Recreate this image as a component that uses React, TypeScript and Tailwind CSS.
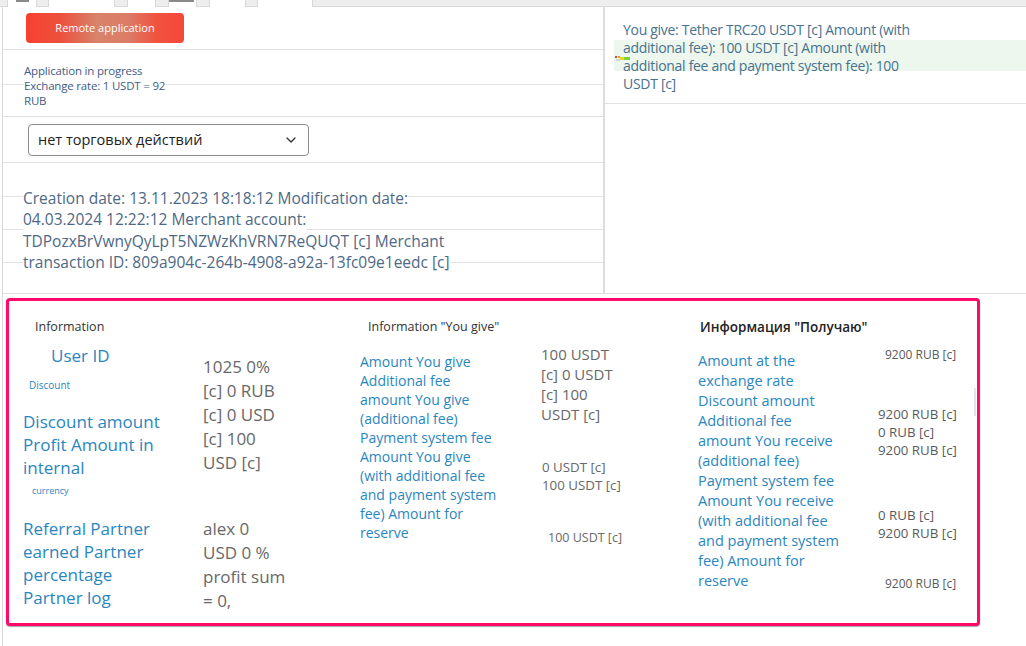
import { ChevronDown } from "lucide-react";

const tabs = [
  { gap: 7, w: 30, mark: [8, 13] },
  { gap: 11, w: 67 },
  { gap: 12, w: 29 },
  { gap: 12, w: 29, mark: [0, 25] },
  { gap: 12, w: 37 },
  { gap: 11, w: 56 },
];

const giveLabels = [
  "Amount You give",
  "Additional fee",
  "amount You give",
  "(additional fee)",
  "Payment system fee",
  "Amount You give",
  "(with additional fee",
  "and payment system",
  "fee) Amount for",
  "reserve",
];

const receiveLabels = [
  "Amount at the",
  "exchange rate",
  "Discount amount",
  "Additional fee",
  "amount You receive",
  "(additional fee)",
  "Payment system fee",
  "Amount You receive",
  "(with additional fee",
  "and payment system",
  "fee) Amount for",
  "reserve",
];

const Lines = ({ lines }: { lines: string[] }) => (
  <>
    {lines.map((l) => (
      <div key={l} className="whitespace-nowrap">
        {l}
      </div>
    ))}
  </>
);

const TopTabs = () => (
  <div className="flex h-[7px] bg-[#eeeeee] border-b border-[#dadada]">
    {tabs.map((t, i) => (
      <div
        key={i}
        className="relative h-[7px] bg-white border-x border-[#d8d8d8]"
        style={{ marginLeft: t.gap, width: t.w }}
      >
        {t.mark && (
          <div
            className="absolute top-0 h-[2px] bg-[#8a8a8a]"
            style={{ left: t.mark[0], width: t.mark[1] }}
          />
        )}
      </div>
    ))}
  </div>
);

const LeftPanel = () => (
  <div className="w-[602px] border-r-2 border-[#dddddd] flex flex-col">
    <div className="h-[43px] pt-[6px] pl-[23px] border-b border-[#e0e0e0]">
      <button className="w-[158px] h-[30px] rounded-[4px] text-white text-[11px] bg-[linear-gradient(90deg,#f8402f_0%,#ec513d_22%,#d8836a_45%,#dc7b66_65%,#f0533f_82%,#f6473b_100%)]">
        Remote application
      </button>
    </div>

    <div className="h-[67px] pt-[13px] pl-[21px] border-b border-[#e0e0e0] bg-[linear-gradient(to_bottom,transparent_34px,#e2e2e2_34px,#e2e2e2_35px,transparent_35px)]">
      <div className="text-[11.5px] leading-[15px] tracking-[-0.2px] text-[#3e5c86]">
        <span className="bg-white">Application in progress</span>
        <br />
        <span className="bg-white">Exchange rate: 1 USDT = 92</span>
        <br />
        <span className="bg-white">RUB</span>
      </div>
    </div>

    <div className="h-[46px] pt-[7px] pl-[25px] border-b border-[#e0e0e0]">
      <div className="w-[281px] h-[32px] border border-[#8d8d8d] rounded-[4px] flex items-center justify-between pl-[9px] pr-[9px] text-[14.5px] text-[#222]">
        <span>нет торговых действий</span>
        <ChevronDown size={16} strokeWidth={2} className="text-[#333]" />
      </div>
    </div>

    <div className="flex-1 pt-[25px] pl-[20px] bg-[linear-gradient(to_bottom,transparent_33px,#e2e2e2_33px,#e2e2e2_34px,transparent_34px,transparent_66px,#e2e2e2_66px,#e2e2e2_67px,transparent_67px,transparent_99px,#e2e2e2_99px,#e2e2e2_100px,transparent_100px)]">
      <div className="text-[15.5px] leading-[21.3px] text-[#4d6986]">
        <span className="bg-white">Creation date: 13.11.2023 18:18:12 Modification date:</span>
        <br />
        <span className="bg-white">04.03.2024 12:22:12 Merchant account:</span>
        <br />
        <span className="bg-white">TDPozxBrVwnyQyLpT5NZWzKhVRN7ReQUQT [c] Merchant</span>
        <br />
        <span className="bg-white">transaction ID: 809a904c-264b-4908-a92a-13fc09e1eedc [c]</span>
      </div>
    </div>
  </div>
);

const RightPanel = () => (
  <div className="flex-1">
    <div className="relative h-[97px] border-b border-[#e0e0e0] pl-[9px]">
      <div className="h-full pt-[14px] pl-[9px] bg-[linear-gradient(to_bottom,transparent_33px,#eef7ed_33px,#eef7ed_64px,transparent_64px)]">
        <div className="text-[14px] leading-[18px] tracking-[-0.3px] text-[#48728f]">
          <div>You give: Tether TRC20 USDT [c] Amount (with</div>
          <div>additional fee): 100 USDT [c] Amount (with</div>
          <div>additional fee and payment system fee): 100</div>
          <div>USDT [c]</div>
        </div>
      </div>
      <svg
        className="absolute left-[10px] top-[47px]"
        width="18"
        height="8"
        viewBox="0 0 18 8"
      >
        <rect x="0" y="2" width="2" height="2" fill="#e04848" />
        <rect x="3" y="2" width="2" height="2" fill="#e0a030" />
        <rect x="5" y="3" width="4" height="3" fill="#e8d820" />
        <rect x="9" y="3" width="6" height="3" fill="#7cd23c" />
        <rect x="1" y="5" width="4" height="2" fill="#cfd8e0" />
      </svg>
    </div>
  </div>
);

const InfoBox = () => (
  <div className="relative mt-[4px] ml-[3px] w-[974px] h-[328px] border-[3px] border-[#ff0a6b] rounded-[4px] bg-white shadow-[0_1px_1px_rgba(0,0,0,0.35)] pl-[14px] pt-[18px] grid grid-cols-[337px_338px_1fr]">
    <div>
      <div className="pl-[12px] text-[12.5px] leading-[16px] text-[#333]">Information</div>
      <div className="flex mt-[9px]">
        <div className="w-[180px] text-[#2a86bf]">
          <div className="pl-[28px] text-[17px] leading-[23px]">User ID</div>
          <div className="pl-[6px] mt-[11px] text-[10px] leading-[14px]">Discount</div>
          <div className="mt-[18px] text-[17px] leading-[23px]">
            <Lines lines={["Discount amount", "Profit Amount in", "internal"]} />
          </div>
          <div className="pl-[9px] mt-[6px] text-[9px] leading-[12px]">currency</div>
        </div>
        <div className="mt-[11px] text-[17px] leading-[24px] text-[#686868]">
          <Lines lines={["1025 0%", "[c] 0 RUB", "[c] 0 USD", "[c] 100", "USD [c]"]} />
        </div>
      </div>
      <div className="flex mt-[20px]">
        <div className="w-[180px] text-[17px] leading-[23px] text-[#2a86bf]">
          <Lines lines={["Referral Partner", "earned Partner", "percentage", "Partner log"]} />
        </div>
        <div className="text-[17px] leading-[24px] text-[#686868]">
          <Lines lines={["alex 0", "USD 0 %", "profit sum", "= 0,"]} />
        </div>
      </div>
    </div>

    <div>
      <div className="pl-[8px] text-[12.5px] leading-[16px] text-[#333]">Information "You give"</div>
      <div className="flex">
        <div className="w-[181px] mt-[17px] text-[14px] leading-[19px] text-[#2a86bf]">
          <Lines lines={giveLabels} />
        </div>
        <div className="mt-[9px] text-[#686868]">
          <div className="text-[15px] leading-[20px]">
            <Lines lines={["100 USDT", "[c] 0 USDT", "[c] 100", "USDT [c]"]} />
          </div>
          <div className="mt-[34px] pl-[1px] text-[13.3px] leading-[18px]">
            <Lines lines={["0 USDT [c]", "100 USDT [c]"]} />
          </div>
          <div className="mt-[36px] pl-[7px] text-[12.5px] leading-[16px]">100 USDT [c]</div>
        </div>
      </div>
    </div>

    <div>
      <div className="pl-[2px] text-[13.5px] leading-[16px] font-semibold text-[#222]">
        Информация "Получаю"
      </div>
      <div className="flex">
        <div className="w-[180px] mt-[16px] text-[14.5px] leading-[20px] text-[#2a86bf]">
          <Lines lines={receiveLabels} />
        </div>
        <div className="mt-[12px] text-[#5a5a5a]">
          <div className="pl-[7px] text-[12px] leading-[16px]">9200 RUB [c]</div>
          <div className="mt-[42px] text-[13.3px] leading-[18px]">
            <Lines lines={["9200 RUB [c]", "0 RUB [c]", "9200 RUB [c] "]} />
          </div>
          <div className="mt-[47px] text-[13.3px] leading-[18px]">
            <Lines lines={["0 RUB [c]", "9200 RUB [c]"]} />
          </div>
          <div className="mt-[34px] pl-[7px] text-[12px] leading-[16px]">9200 RUB [c]</div>
        </div>
      </div>
    </div>
    <div className="absolute right-[1px] top-[87px] w-[2px] h-[28px] bg-[#e6e2f0]" />
  </div>
);

export default function App() {
  return (
    <div className="w-[1026px] h-[646px] overflow-hidden bg-white font-['Open_Sans',sans-serif]">
      <TopTabs />
      <div className="ml-[2px] h-[639px] border-l border-[#d9d9d9]">
        <div className="flex h-[287px] border-b border-[#dedede]">
          <LeftPanel />
          <RightPanel />
        </div>
        <InfoBox />
      </div>
    </div>
  );
}
